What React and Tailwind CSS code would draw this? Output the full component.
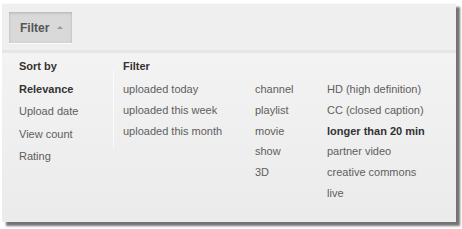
import { useState } from 'react'

const sortOptions = ['Relevance', 'Upload date', 'View count', 'Rating']

const filterColumns = [
  ['uploaded today', 'uploaded this week', 'uploaded this month'],
  ['channel', 'playlist', 'movie', 'show', '3D'],
  ['HD (high definition)', 'CC (closed caption)', 'longer than 20 min', 'partner video', 'creative commons', 'live'],
]

export default function App() {
  const [sort, setSort] = useState('Relevance')
  const [active, setActive] = useState('longer than 20 min')

  return (
    <div className="w-[462px] h-[229px] bg-white pt-[3px] pl-[2px]" style={{ fontFamily: '"Liberation Sans", Arial, sans-serif' }}>
      <div className="w-[454px] h-[219px] bg-[#efefef] border-t border-[#fafafa] shadow-[4px_4px_2px_rgba(0,0,0,0.55)] flex flex-col">
        <div className="h-[46px] pl-[7px] pt-[8px]">
          <button className="w-[63px] h-[32px] bg-[#d9d9d9] border-b border-[#fbfbfb] shadow-[inset_0_1px_3px_rgba(0,0,0,0.18)] flex items-center pl-[11px] gap-[8px] text-[12px] font-bold text-[#555]">
            Filter
            <span className="w-0 h-0 border-l-[3px] border-r-[3px] border-b-[3px] border-l-transparent border-r-transparent border-b-[#999]"></span>
          </button>
        </div>
        <div className="flex-1 border-t-[3px] border-[#e6e6e6] bg-gradient-to-b from-[#f3f3f3] to-[#ebebeb] flex pt-[2px] text-[11px]">
          <div className="w-[111px] pl-[17px]">
            <div className="font-bold text-[#333] h-[23px] leading-[22px]">Sort by</div>
            {sortOptions.map((o) => (
              <div
                key={o}
                onClick={() => setSort(o)}
                className={`h-[22.4px] leading-[22.4px] cursor-pointer ${sort === o ? 'font-bold text-[#333]' : 'text-[#5e5e5e]'}`}
              >
                {o}
              </div>
            ))}
          </div>
          <div className="w-px h-[78px] mt-[15px] bg-[#fbfbfb]"></div>
          <div className="pl-[9px]">
            <div className="font-bold text-[#333] h-[24px] leading-[22px]">Filter</div>
            <div className="flex">
              {filterColumns.map((col, i) => (
                <div key={i} className={i === 0 ? 'w-[132px]' : i === 1 ? 'w-[72px]' : ''}>
                  {col.map((o) => (
                    <div
                      key={o}
                      onClick={() => setActive(o)}
                      className={`h-[20.8px] leading-[20.8px] cursor-pointer whitespace-nowrap ${active === o ? 'font-bold text-[#333]' : 'text-[#5e5e5e]'}`}
                    >
                      {o}
                    </div>
                  ))}
                </div>
              ))}
            </div>
          </div>
        </div>
      </div>
    </div>
  )
}
